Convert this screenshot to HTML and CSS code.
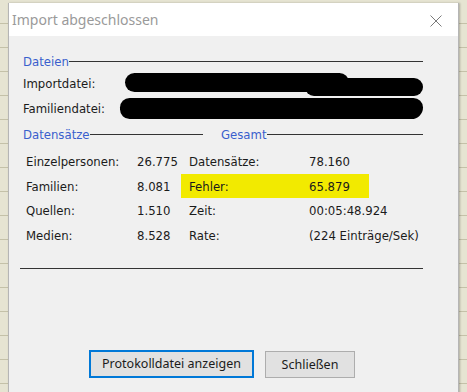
FILE: index.html
```html
<!DOCTYPE html>
<html lang="de">
<head>
    <meta charset="UTF-8">
    <title>Import abgeschlossen</title>
    <link rel="stylesheet" href="styles.css">
</head>
<body>
    <div class="dialog">
        <div class="titlebar">
            <span class="title">Import abgeschlossen</span>
            <svg class="close" width="12" height="12" viewBox="0 0 12 12">
                <path d="M0.5 0.5 L11.5 11.5 M11.5 0.5 L0.5 11.5" stroke="#7a7a7a" stroke-width="1" fill="none"/>
            </svg>
        </div>

        <div class="content">
            <div class="group-head">
                <span class="group-label">Dateien</span>
                <span class="group-line"></span>
            </div>

            <div class="file-row">
                <span class="file-label">Importdatei:</span>
                <div class="redact">
                    <span class="blob blob-a"></span>
                    <span class="blob blob-b"></span>
                </div>
            </div>
            <div class="file-row">
                <span class="file-label">Familiendatei:</span>
                <div class="redact redact-2">
                    <span class="blob blob-c"></span>
                </div>
            </div>

            <div class="stats-head">
                <div class="group-head head-left">
                    <span class="group-label">Datensätze</span>
                    <span class="group-line"></span>
                </div>
                <div class="group-head head-right">
                    <span class="group-label">Gesamt</span>
                    <span class="group-line"></span>
                </div>
            </div>

            <div class="stats">
                <span>Einzelpersonen:</span><span>26.775</span>
                <span>Datensätze:</span><span>78.160</span>

                <span>Familien:</span><span>8.081</span>
                <span class="mark mark-first">Fehler:</span><span class="mark mark-last">65.879</span>

                <span>Quellen:</span><span>1.510</span>
                <span>Zeit:</span><span>00:05:48.924</span>

                <span>Medien:</span><span>8.528</span>
                <span>Rate:</span><span>(224 Einträge/Sek)</span>
            </div>

            <div class="rule"></div>

            <div class="buttons">
                <button class="btn btn-default">Protokolldatei anzeigen</button>
                <button class="btn">Schließen</button>
            </div>
        </div>
    </div>
</body>
</html>
```

FILE: styles.css
```css
* {
    margin: 0;
    padding: 0;
    box-sizing: border-box;
}

body {
    width: 467px;
    height: 392px;
    overflow: hidden;
    background: repeating-linear-gradient(to bottom, #e6e4d2 0, #e6e4d2 23px, #c4c1a8 23px, #c4c1a8 24px);
    padding: 3px 0 0 8px;
    font-family: 'DejaVu Sans Condensed', 'DejaVu Sans', sans-serif;
    font-stretch: condensed;
    font-size: 13px;
    color: #1b1b1b;
}

.dialog {
    width: 451px;
    height: 400px;
    background: #f0f0f0;
    border: 1px solid #b5b5b5;
    border-top: none;
    box-shadow: 1px 0 2px rgba(0, 0, 0, 0.25);
}

.titlebar {
    height: 33px;
    background: #ffffff;
    display: flex;
    align-items: center;
    justify-content: space-between;
    padding: 0 16px 0 3px;
}

.title {
    font-family: 'Noto Sans', sans-serif;
    font-stretch: normal;
    font-size: 14px;
    color: #9a9a9a;
}

.close {
    margin-top: 2px;
}

.content {
    padding: 15px 35px 0 14px;
}

.group-head {
    display: flex;
    align-items: center;
    height: 20px;
}

.group-label {
    color: #3a5fcd;
}

.group-line {
    flex: 1;
    border-top: 1px solid #333;
    margin-top: 1px;
}

.file-row {
    display: flex;
    align-items: center;
    height: 25px;
}

.file-row:first-of-type {
    margin-top: 2px;
}

.file-label {
    width: 104px;
}

.redact {
    flex: 1;
    display: flex;
    align-items: flex-start;
    height: 24px;
    margin-top: 2px;
}

.redact-2 {
    margin-left: -5px;
}

.blob {
    display: block;
    background: #000;
    border-radius: 10px;
}

.blob-a {
    width: 224px;
    height: 19px;
}

.blob-b {
    width: 118px;
    height: 18px;
    margin-left: -44px;
    margin-top: 5px;
}

.blob-c {
    width: 303px;
    height: 21px;
    margin-top: 0;
    border-radius: 10px 10px 12px 10px;
}

.stats-head {
    display: flex;
    margin-top: 3px;
}

.head-left {
    width: 180px;
}

.head-right {
    flex: 1;
    margin-left: 18px;
}

.stats {
    display: grid;
    grid-template-columns: 111px 52px 120px auto;
    grid-auto-rows: 24.7px;
    align-items: center;
    padding-left: 3px;
    margin-top: 5px;
}

.stats span {
    height: 100%;
    display: flex;
    align-items: center;
}

.mark {
    background: #f2ea00;
}

.mark-first {
    margin-left: -8px;
    padding-left: 8px;
}

.mark-last {
    margin-right: 54px;
}

.rule {
    border-top: 1px solid #333;
    margin: 20px 0 0 -3px;
}

.buttons {
    display: flex;
    gap: 11px;
    margin: 81px 0 0 66px;
}

.btn {
    height: 28px;
    padding: 0 8px;
    font-family: 'Noto Sans', sans-serif;
    font-size: 12.5px;
    color: #1b1b1b;
    background: #e1e1e1;
    border: 1px solid #adadad;
}

.btn-default {
    width: 165px;
    border: 2px solid #0078d7;
}

.btn:not(.btn-default) {
    width: 90px;
    height: 27px;
    margin-top: 1px;
}
```
